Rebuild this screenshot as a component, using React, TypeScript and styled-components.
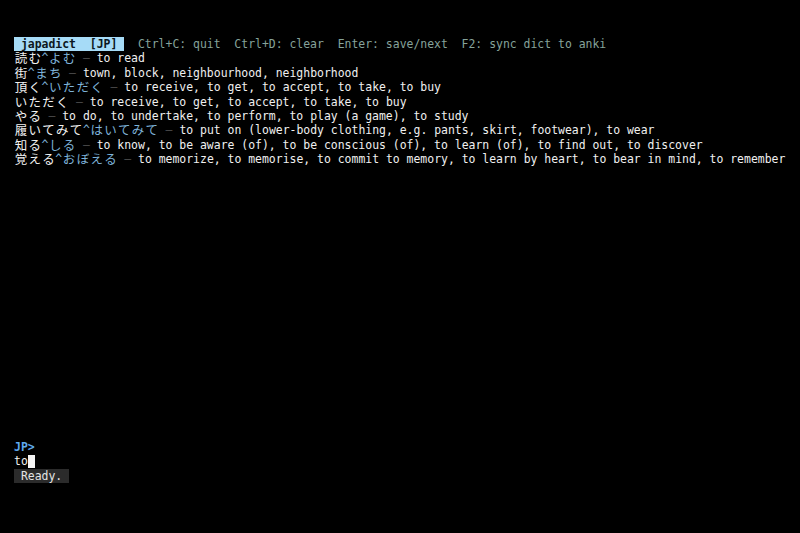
import React from "react";
import styled, { createGlobalStyle } from "styled-components";

const CELL = 6.893;

const Global = createGlobalStyle`
  html, body { margin: 0; padding: 0; background: #000; }
  body { width: 800px; height: 533px; overflow: hidden; }
`;

const Term = styled.div`
  box-sizing: border-box;
  height: 533px;
  padding: 37px 14px 50px 14px;
  display: flex;
  flex-direction: column;
  font-family: "DejaVu Sans Mono", "Liberation Mono", monospace;
  font-size: 11.45px;
  line-height: 14.4px;
  color: #ececec;
  white-space: pre;
`;

const Line = styled.div`
  display: flex;
  height: 14.4px;
`;

const Bottom = styled.div`
  margin-top: auto;
  display: flex;
  flex-direction: column;
`;

const Title = styled.span`
  background: #a6dbf7;
  color: #0b1620;
  font-weight: bold;
`;

const Hint = styled.span`
  color: #86a39b;
`;

const Word = styled.span`
  color: #f2f2f2;
`;

const Reading = styled.span`
  color: #7eb3d9;
`;

const Dash = styled.span`
  color: #4a4a4a;
`;

const Def = styled.span`
  color: #f0f0f0;
`;

const Wide = styled.span`
  display: inline-block;
  width: ${CELL * 2}px;
  text-align: center;
  font-family: "Noto Sans CJK JP", sans-serif;
  font-size: 12.5px;
  line-height: 14.4px;
  vertical-align: top;
`;

const Prompt = styled.span`
  color: #5fa9ee;
  font-weight: bold;
`;

const Cursor = styled.span`
  display: inline-block;
  width: ${CELL}px;
  height: 13px;
  margin-top: 1px;
  background: #f4f4f4;
`;

const Status = styled.span`
  background: #2b2b2b;
  color: #e4e4e4;
`;

const wide = (s: string) =>
  Array.from(s).map((c, i) =>
    c.charCodeAt(0) > 0x2e80 ? <Wide key={i}>{c}</Wide> : <React.Fragment key={i}>{c}</React.Fragment>
  );

type Entry = { word: string; reading?: string; def: string };

const entries: Entry[] = [
  { word: "読む", reading: "よむ", def: "to read" },
  { word: "街", reading: "まち", def: "town, block, neighbourhood, neighborhood" },
  { word: "頂く", reading: "いただく", def: "to receive, to get, to accept, to take, to buy" },
  { word: "いただく", def: "to receive, to get, to accept, to take, to buy" },
  { word: "やる", def: "to do, to undertake, to perform, to play (a game), to study" },
  {
    word: "履いてみて",
    reading: "はいてみて",
    def: "to put on (lower-body clothing, e.g. pants, skirt, footwear), to wear",
  },
  {
    word: "知る",
    reading: "しる",
    def: "to know, to be aware (of), to be conscious (of), to learn (of), to find out, to discover",
  },
  {
    word: "覚える",
    reading: "おぼえる",
    def: "to memorize, to memorise, to commit to memory, to learn by heart, to bear in mind, to remember",
  },
];

export default function App() {
  return (
    <>
      <Global />
      <Term>
        <Line>
          <Title>{" japadict  [JP] "}</Title>
          <Hint>{"  Ctrl+C: quit  Ctrl+D: clear  Enter: save/next  F2: sync dict to anki"}</Hint>
        </Line>
        {entries.map((e, i) => (
          <Line key={i}>
            <Word>{wide(e.word)}</Word>
            {e.reading && <Reading>{"^"}{wide(e.reading)}</Reading>}
            <Dash>{" – "}</Dash>
            <Def>{e.def}</Def>
          </Line>
        ))}
        <Bottom>
          <Line>
            <Prompt>JP&gt;</Prompt>
          </Line>
          <Line>
            <Def>to</Def>
            <Cursor />
          </Line>
          <Line>
            <Status>{" Ready. "}</Status>
          </Line>
        </Bottom>
      </Term>
    </>
  );
}
